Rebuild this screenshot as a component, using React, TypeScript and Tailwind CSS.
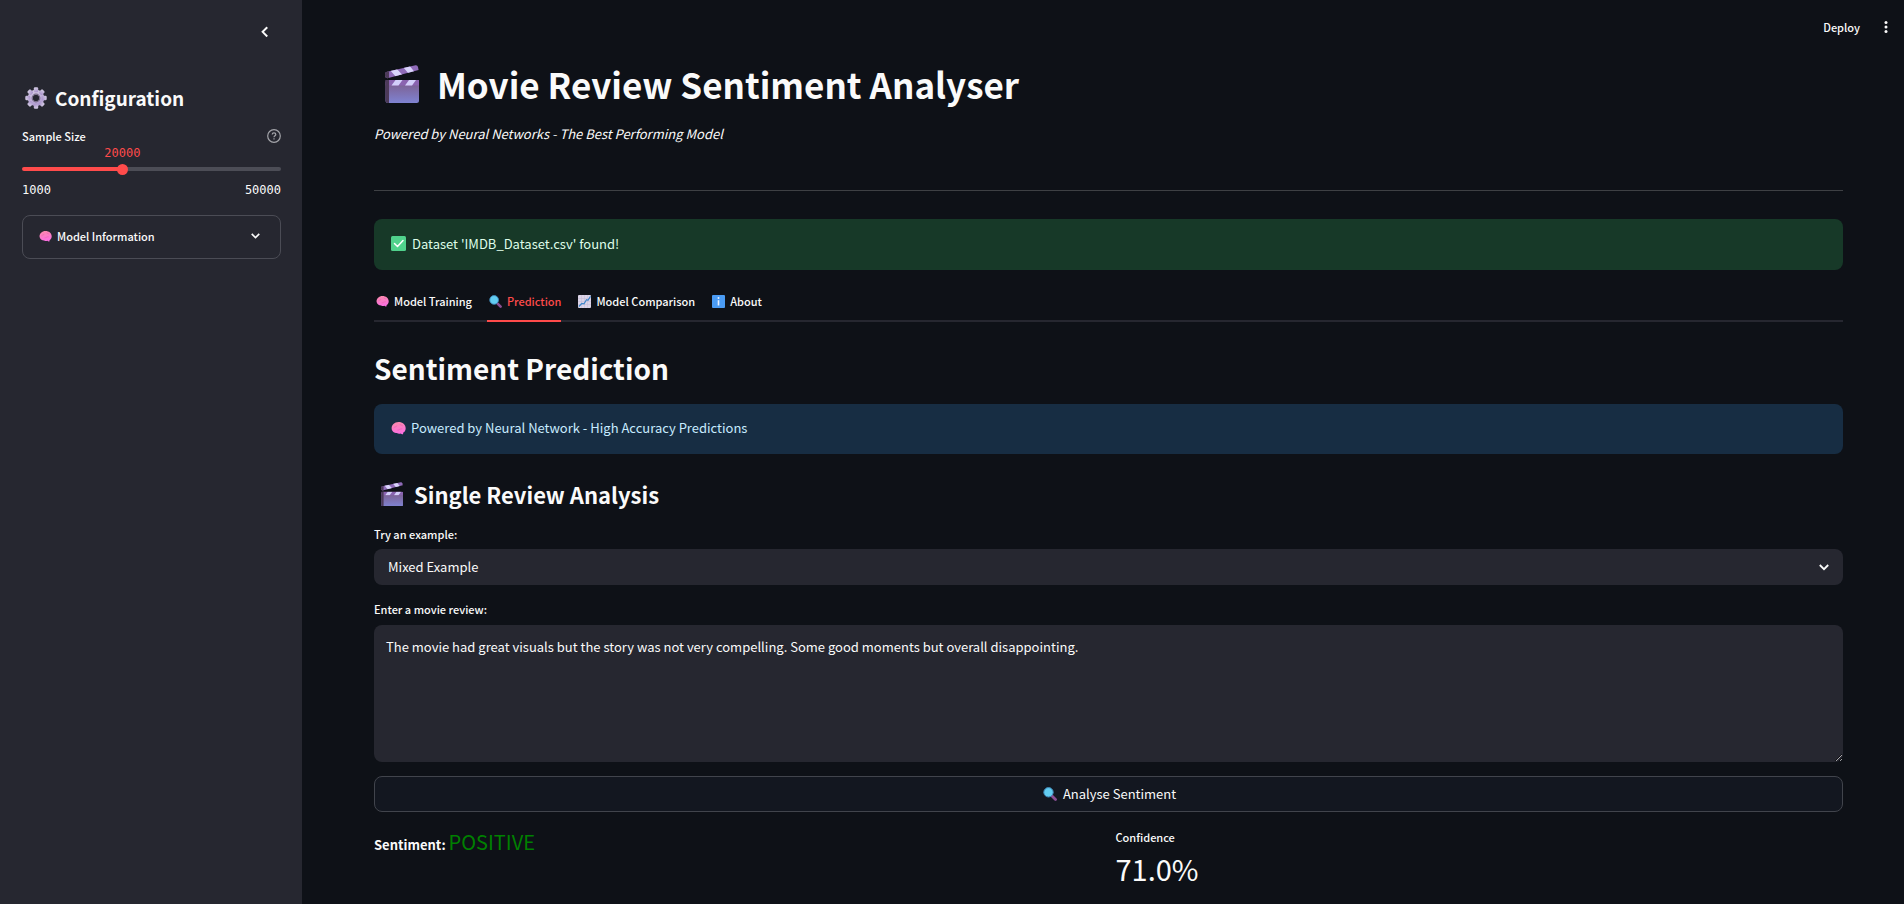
import { useState } from "react";

type IconProps = { className?: string };

function Clapper({ className }: IconProps) {
  return (
    <svg viewBox="0 0 34 38" className={className} aria-hidden="true">
      <defs>
        <linearGradient id="clapBody" x1="0" y1="0" x2="0" y2="1">
          <stop offset="0" stopColor="#7c5a86" />
          <stop offset="1" stopColor="#7f83d2" />
        </linearGradient>
        <clipPath id="clapArm"><path d="M0 8.500 Q0 7.200 2 6.700 L30.500 0.300 Q32.500 0 33 2 L33.600 5 L2.500 13.200 Q0 13 0 11Z" /></clipPath>
        <clipPath id="clapTop"><rect x="0.5" y="15" width="33.5" height="6" /></clipPath>
      </defs>
      <g clipPath="url(#clapArm)">
        <rect width="34" height="14" fill="#8f6bb8" />
        <path d="M5 5 L11 12 L17.500 10 L11 3Z M18 2 L23.500 8.500 L29.500 7 L24 0Z" fill="#d9d4fb" />
        <path d="M0 5h4v9H0z" fill="#4c3a59" />
      </g>
      <rect x="0.5" y="15" width="33.5" height="23" rx="2.5" fill="url(#clapBody)" />
      <g clipPath="url(#clapTop)">
        <rect x="0.5" y="15" width="34" height="5.500" fill="#8a63b0" />
        <path d="M10.500 15h7l-4 5.500h-7z M24 15h7l-4 5.500h-7z" fill="#d3cefa" />
      </g>
      <path d="M4 15v23H3a2.500 2.500 0 0 1-2.500-2.500V15z" fill="#4c3a59" />
    </svg>
  );
}

function Brain({ className }: IconProps) {
  return (
    <svg viewBox="0 0 14 13" className={className} aria-hidden="true">
      <defs>
        <linearGradient id="brainFill" x1="0" y1="0" x2="0.2" y2="1">
          <stop offset="0" stopColor="#f98ba8" />
          <stop offset="1" stopColor="#fb6fe0" />
        </linearGradient>
      </defs>
      <path d="M.6 7.200C.4 3.800 3.200 1 7 1c3.800 0 6.700 2.400 6.700 5.800 0 2-.9 3.400-2.200 4l-.3 1.500c-.9.4-1.500.1-2-.6-1.200.3-2.700.3-3.700-.4C3.200 11.300.8 9.600.6 7.200z" fill="url(#brainFill)" />
      <path d="M2.500 6.500c1-1.500 2.500-.5 3-2.300M6 8.500c1.500.2 2.500-1.500 4.500-1.200M8 2.800c.5 1.200 2 .8 3 1.800" fill="none" stroke="#e65aa8" strokeWidth=".5" />
    </svg>
  );
}

function Magnifier({ className }: IconProps) {
  return (
    <svg viewBox="0 0 14 14" className={className} aria-hidden="true">
      <path d="M9 9l3.500 3.500" stroke="#8a4f93" strokeWidth="2.800" strokeLinecap="round" />
      <circle cx="5.500" cy="5.300" r="4.700" fill="#62cdf1" stroke="#3f87b8" strokeWidth="1" />
    </svg>
  );
}

function Check({ className }: IconProps) {
  return (
    <svg viewBox="0 0 15 15" className={className} aria-hidden="true">
      <rect width="15" height="15" rx="1.500" fill="#50d28c" />
      <path d="M3.500 7.500l3 3 5.500-6" fill="none" stroke="#fff" strokeWidth="1.500" strokeLinecap="round" strokeLinejoin="round" />
    </svg>
  );
}

function Chart({ className }: IconProps) {
  return (
    <svg viewBox="0 0 13 13" className={className} aria-hidden="true">
      <rect width="13" height="13" rx="1" fill="#dcd5e8" />
      <path d="M3.500 0v13M6.500 0v13M9.500 0v13M0 3.500h13M0 6.500h13M0 9.500h13" stroke="#c4bad6" strokeWidth=".5" />
      <path d="M.8 11.500l3-3 2.200.3 2.500-4 1.500.5 2.500-4" fill="none" stroke="#3f86c9" strokeWidth="1.200" />
    </svg>
  );
}

function Info({ className }: IconProps) {
  return (
    <svg viewBox="0 0 13 13" className={className} aria-hidden="true">
      <rect width="13" height="13" rx="1" fill="#4a9bf3" />
      <circle cx="6.500" cy="3" r="1" fill="#e6f1ff" />
      <path d="M6.500 5.200v5.300" stroke="#e6f1ff" strokeWidth="1.600" />
    </svg>
  );
}

function Gear({ className }: IconProps) {
  const teeth = [0, 45, 90, 135, 180, 225, 270, 315];
  return (
    <svg viewBox="0 0 22 22" className={className} aria-hidden="true">
      <defs>
        <linearGradient id="gearFill" x1="0.200" y1="0" x2="0.500" y2="1">
          <stop offset="0" stopColor="#d6cfe4" />
          <stop offset="1" stopColor="#ac96cd" />
        </linearGradient>
        <mask id="gearHole">
          <rect width="22" height="22" fill="#fff" />
          <circle cx="11" cy="11" r="3.200" fill="#000" />
        </mask>
      </defs>
      <g fill="url(#gearFill)" mask="url(#gearHole)">
        <circle cx="11" cy="11" r="8.300" />
        {teeth.map((a) => (
          <rect key={a} x="8.800" y="0.300" width="4.400" height="5" rx="1.200" transform={`rotate(${a} 11 11)`} />
        ))}
      </g>
      <circle cx="11" cy="11" r="3.800" fill="none" stroke="#766a86" strokeWidth="1.200" />
    </svg>
  );
}

function Chevron({ className }: IconProps) {
  return (
    <svg viewBox="0 0 10 7" className={className} fill="none" stroke="currentColor" strokeWidth="1.800" aria-hidden="true">
      <path d="M.8 1l4.200 4.200L9.200 1" />
    </svg>
  );
}

const tabs = [
  { label: "Model Training", Icon: Brain },
  { label: "Prediction", Icon: Magnifier },
  { label: "Model Comparison", Icon: Chart },
  { label: "About", Icon: Info },
];

function Sidebar() {
  const [size, setSize] = useState(20000);
  const percent = ((size - 1000) / 49000) * 100;
  return (
    <aside className="w-[302px] shrink-0 bg-[#262730] pr-[21px] pl-[22px]">
      <div className="flex h-16 items-center justify-end pr-[7px]">
        <button aria-label="Collapse sidebar" className="p-1">
          <Chevron className="w-[11px] rotate-90" />
        </button>
      </div>
      <h2 className="mt-4 flex h-9 items-center gap-2 pl-[3px] text-[19px] font-bold">
        <Gear className="size-[22px]" />
        Configuration
      </h2>
      <div className="mt-[11px] flex h-[18px] items-center justify-between text-[11px] font-medium">
        <label htmlFor="sample">Sample Size</label>
        <button aria-label="Help" className="text-[#a3a4a9]">
          <svg viewBox="0 0 14 14" className="size-[14px]" fill="none" stroke="currentColor" strokeWidth="1.200">
            <circle cx="7" cy="7" r="6.300" />
            <path d="M5.200 5.600c0-1.100.8-1.700 1.800-1.700s1.800.7 1.800 1.600c0 1.200-1.800 1.400-1.800 2.700M7 9.300v1.200" />
          </svg>
        </button>
      </div>
      <div className="relative h-[22px] font-['DejaVu_Sans_Mono',monospace] text-[12px] leading-4">
        <output htmlFor="sample" className="absolute -translate-x-1/2 text-[#ff4b4b]" style={{ left: `${percent}%` }}>{size}</output>
      </div>
      <div
        className="relative h-1 rounded-full"
        style={{ background: `linear-gradient(to right, #ff4b4b ${percent}%, #4c4d56 ${percent}%)` }}
      >
        <input
          id="sample"
          type="range"
          min={1000}
          max={50000}
          step={1000}
          value={size}
          onChange={(e) => setSize(Number(e.target.value))}
          className="absolute top-0 -left-[6px] h-1 w-[calc(100%+12px)] appearance-none bg-transparent [&::-webkit-slider-thumb]:size-[11px] [&::-webkit-slider-thumb]:appearance-none [&::-webkit-slider-thumb]:rounded-full [&::-webkit-slider-thumb]:bg-[#ff4b4b]"
        />
      </div>
      <div className="mt-[11px] flex justify-between font-['DejaVu_Sans_Mono',monospace] text-[12px] leading-4">
        <span>1000</span>
        <span>50000</span>
      </div>
      <button aria-expanded="false" className="mt-[17px] flex h-11 w-full items-center rounded-lg border border-[#4b4c55] pr-5 pb-[2px] pl-4 text-[11px] font-medium">
        <Brain className="mr-[5px] w-[13px]" />
        Model Information
        <Chevron className="ml-auto w-[9px]" />
      </button>
    </aside>
  );
}

export default function App() {
  const [tab, setTab] = useState(1);
  const [review, setReview] = useState(
    "The movie had great visuals but the story was not very compelling. Some good moments but overall disappointing.",
  );
  return (
    <div className="flex min-h-screen bg-[#0e1117] font-['Noto_Sans_CJK_JP','Noto_Sans',sans-serif] text-[13px] text-[#fafafa]">
      <Sidebar />
      <div className="flex min-w-0 flex-1 flex-col">
        <header className="flex h-[54px] items-center justify-end gap-5 pr-3 text-[11px] font-medium">
          <button>Deploy</button>
          <button aria-label="Menu" className="px-1">
            <svg viewBox="0 0 4 14" className="h-[14px] w-1" fill="currentColor">
              <circle cx="2" cy="2.500" r="1.500" />
              <circle cx="2" cy="7" r="1.500" />
              <circle cx="2" cy="11.500" r="1.500" />
            </svg>
          </button>
        </header>
        <main className="flex flex-col pr-[61px] pl-18">
          <h1 className="flex h-[60px] items-center gap-[18px] pl-[11px] text-[35px] font-bold">
            <Clapper className="w-[34px]" />
            Movie Review Sentiment Analyser
          </h1>
          <p className="mt-2 leading-6 italic">Powered by Neural Networks - The Best Performing Model</p>
          <hr className="mt-11 border-[#3e4044]" />
          <div role="status" className="mt-7 flex h-[51px] items-center gap-[6px] rounded-lg bg-[#173928] px-[17px] pb-[2px] text-[#dffde9]">
            <Check className="size-[15px]" />
            Dataset 'IMDB_Dataset.csv' found!
          </div>
          <div role="tablist" className="mt-[14px] flex h-[38px] gap-[15px] border-b-2 border-[#262730] text-[11px] font-medium">
            {tabs.map(({ label, Icon }, i) => (
              <button
                key={label}
                role="tab"
                aria-selected={tab === i}
                onClick={() => setTab(i)}
                className={`-mb-[2px] flex items-center gap-[5px] border-b-2 pb-[2px] pl-[2px] ${tab === i ? "border-[#ff4b4b] text-[#ff4b4b]" : "border-transparent"}`}
              >
                <Icon className="w-[13px]" />
                {label}
              </button>
            ))}
          </div>
          <h2 className="mt-6 text-[28px] leading-[44px] font-bold">Sentiment Prediction</h2>
          <div role="status" className="mt-[14px] flex h-[50px] items-center gap-[5px] rounded-lg bg-[#172d43] px-[17px] pb-[2px] text-[#c7ebff]">
            <Brain className="w-[15px]" />
            Powered by Neural Network - High Accuracy Predictions
          </div>
          <h3 className="mt-6 flex h-8 items-center gap-[11px] pl-[7px] text-[22px] font-bold">
            <Clapper className="w-[22px]" />
            Single Review Analysis
          </h3>
          <label htmlFor="example" className="mt-[15px] text-[11px] leading-[18px] font-medium">Try an example:</label>
          <div className="relative mt-[6px]">
            <select id="example" className="h-9 w-full appearance-none rounded-lg bg-[#262730] px-[14px]">
              <option>Mixed Example</option>
            </select>
            <Chevron className="pointer-events-none absolute top-[15px] right-[14px] w-[10px]" />
          </div>
          <label htmlFor="review" className="mt-[15px] text-[11px] leading-[18px] font-medium">Enter a movie review:</label>
          <textarea
            id="review"
            value={review}
            onChange={(e) => setReview(e.target.value)}
            className="mt-[7px] h-[137px] w-full resize-y rounded-lg bg-[#262730] px-3 py-[11px] leading-[22px]"
          />
          <button className="mt-[14px] flex h-9 items-center justify-center gap-[6px] rounded-lg border border-[#41444c] bg-[#131720] pl-[2px]">
            <Magnifier className="size-[14px]" />
            Analyse Sentiment
          </button>
          <div className="mt-[14px] grid grid-cols-2 gap-[14px]">
            <p className="leading-8">
              <strong>Sentiment:</strong> <span className="text-[20px] text-[#008000]">POSITIVE</span>
            </p>
            <div>
              <p className="text-[11px] leading-[22px] font-medium">Confidence</p>
              <p className="text-[29px] leading-10">71.0%</p>
            </div>
          </div>
        </main>
      </div>
    </div>
  );
}
